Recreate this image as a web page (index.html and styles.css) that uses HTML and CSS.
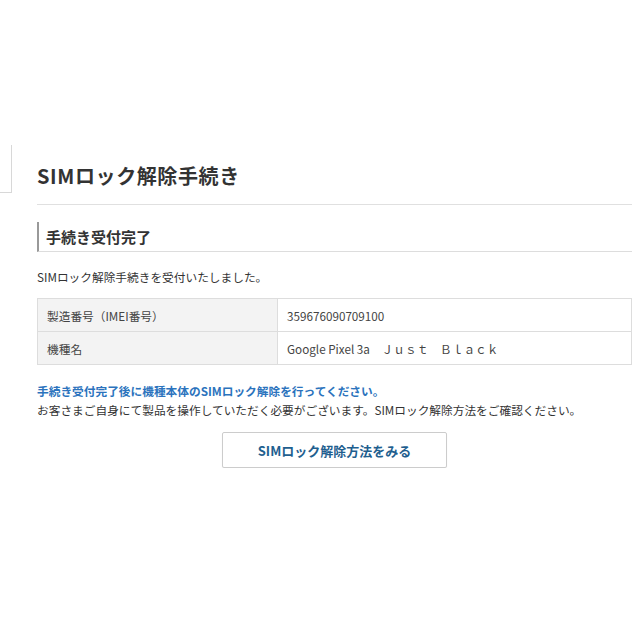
FILE: index.html
```html
<!DOCTYPE html>
<html lang="ja">
<head>
<meta charset="utf-8">
<title>SIMロック解除手続き</title>
<link rel="stylesheet" href="styles.css">
</head>
<body>
<div class="page">
  <div class="side"></div>
  <main class="main">
    <h1 class="title">SIMロック解除手続き</h1>
    <h2 class="subtitle">手続き受付完了</h2>
    <p class="lead">SIMロック解除手続きを受付いたしました。</p>
    <table class="info">
      <tr><th>製造番号（IMEI番号）</th><td>359676090709100</td></tr>
      <tr><th>機種名</th><td>Google Pixel 3a　Ｊｕｓｔ　Ｂｌａｃｋ</td></tr>
    </table>
    <p class="notice">手続き受付完了後に機種本体のSIMロック解除を行ってください。</p>
    <p class="note">お客さまご自身にて製品を操作していただく必要がございます。SIMロック解除方法をご確認ください。</p>
    <div class="actions"><a class="btn" href="#">SIMロック解除方法をみる</a></div>
  </main>
</div>
</body>
</html>
```
FILE: styles.css
```css
html, body { margin: 0; padding: 0; background: #fff; }
body {
  font-family: "Noto Sans CJK JP", "Noto Sans", sans-serif;
  color: #333;
}
.page {
  display: flex;
  align-items: flex-start;
  padding-top: 145px;
}
.side {
  width: 11px;
  height: 47px;
  border-right: 1px solid #d8d8d8;
  border-bottom: 1px solid #d8d8d8;
  flex: none;
}
.main {
  margin-left: 25px;
  width: 595px;
  padding-top: 16px;
}
.title {
  margin: 0;
  font-size: 20px;
  font-weight: 700;
  line-height: 30px;
  letter-spacing: 0.6px;
  padding-bottom: 13px;
  border-bottom: 1px solid #e0e0e0;
  color: #333;
}
.subtitle {
  margin: 17px 0 0;
  font-size: 15px;
  font-weight: 700;
  line-height: 29px;
  padding-left: 7px;
  border-left: 2px solid #999;
  border-bottom: 1px solid #ddd;
  color: #333;
}
.lead {
  margin: 16px 0 0;
  font-size: 11.7px;
  line-height: 18px;
}
.info {
  margin-top: 12px;
  width: 100%;
  border-collapse: collapse;
  font-size: 11.7px;
}
.info th, .info td {
  border: 1px solid #ddd;
  height: 32px;
  padding: 0 9px;
  text-align: left;
  font-weight: 400;
  color: #444;
}
.info th {
  width: 221px;
  background: #f3f3f3;
}
.notice {
  margin: 16px 0 0;
  font-size: 11.7px;
  line-height: 19px;
  font-weight: 700;
  color: #2b73bd;
}
.note {
  margin: 0;
  font-size: 11.7px;
  line-height: 19px;
}
.actions {
  display: flex;
  justify-content: center;
  margin-top: 13px;
}
.btn {
  display: flex;
  align-items: center;
  justify-content: center;
  width: 223px;
  height: 34px;
  border: 1px solid #ccc;
  border-radius: 2px;
  box-shadow: 0 1px 1px rgba(0,0,0,0.08);
  font-size: 13px;
  font-weight: 700;
  color: #1f5f8f;
  text-decoration: none;
}
```
